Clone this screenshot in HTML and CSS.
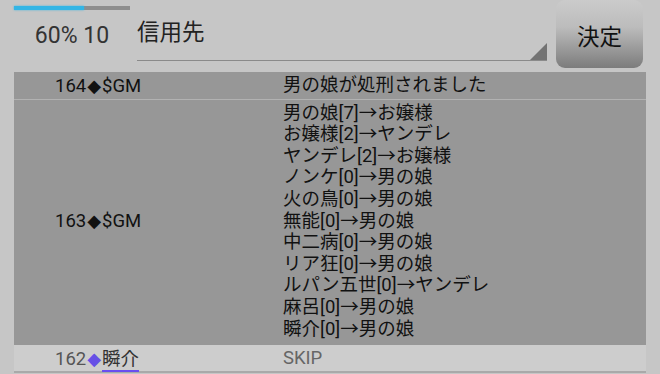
FILE: index.html
```html
<!DOCTYPE html>
<html lang="ja">
<head>
<meta charset="utf-8">
<link rel="stylesheet" href="styles.css">
</head>
<body>
<div class="screen">
  <header class="top">
    <div class="status">
      <div class="progress"><div class="progress-fill" style="width:60%"></div></div>
      <div class="status-label">60% 10</div>
    </div>
    <div class="spinner">信用先</div>
    <div class="decide">決定</div>
  </header>
  <div class="log">
    <div class="row dark sep">
      <div class="who">164<span class="dia">◆</span>$GM</div>
      <div class="what">男の娘が処刑されました</div>
    </div>
    <div class="row dark tall">
      <div class="who mid">163<span class="dia">◆</span>$GM</div>
      <div class="what">
        <div>男の娘[7]→お嬢様</div>
        <div>お嬢様[2]→ヤンデレ</div>
        <div>ヤンデレ[2]→お嬢様</div>
        <div>ノンケ[0]→男の娘</div>
        <div>火の鳥[0]→男の娘</div>
        <div>無能[0]→男の娘</div>
        <div>中二病[0]→男の娘</div>
        <div>リア狂[0]→男の娘</div>
        <div>ルパン五世[0]→ヤンデレ</div>
        <div>麻呂[0]→男の娘</div>
        <div>瞬介[0]→男の娘</div>
      </div>
    </div>
    <div class="row light">
      <div class="who">162<span class="dia purple">◆</span><span class="name">瞬介</span></div>
      <div class="what skip">SKIP</div>
    </div>
  </div>
</div>
</body>
</html>
```
FILE: styles.css
```css
html, body {
  margin: 0;
  padding: 0;
}
body {
  width: 660px;
  height: 374px;
  overflow: hidden;
  background: #c6c6c6;
  font-family: Roboto, "Noto Sans CJK JP", sans-serif;
  color: #111;
}
.top {
  display: flex;
  align-items: flex-start;
  height: 72px;
}
.status {
  width: 116px;
  margin-left: 14px;
  padding-top: 6px;
}
.progress {
  height: 4px;
  background: #8e8e8e;
}
.progress-fill {
  height: 4px;
  background: #33b5e5;
  box-shadow: 0 0 2px #33b5e5;
}
.status-label {
  margin-top: 13px;
  text-align: center;
  font-size: 23px;
  line-height: 26px;
  color: #333;
}
.spinner {
  position: relative;
  margin-left: 7px;
  width: 410px;
  height: 43px;
  padding-top: 17px;
  border-bottom: 1px solid #8a8a8a;
  font-size: 22.5px;
  line-height: 30px;
  color: #222;
  box-sizing: content-box;
}
.spinner::after {
  content: "";
  position: absolute;
  right: 0;
  bottom: 0;
  width: 0;
  height: 0;
  border-left: 17px solid transparent;
  border-bottom: 17px solid #737373;
}
.decide {
  margin-left: 9px;
  width: 87px;
  height: 68px;
  border-radius: 9px;
  background: linear-gradient(#cbcbcb 0%, #bcbcbc 40%, #7c7c7c 100%);
  display: flex;
  align-items: center;
  justify-content: center;
  font-size: 22.5px;
  color: #111;
  padding-top: 1px;
  box-sizing: border-box;
}
.log {
  margin: 0 14px;
  width: 632px;
}
.row {
  display: grid;
  grid-template-columns: 269px 1fr;
  font-size: 18.5px;
  line-height: 21.6px;
}
.row.dark {
  background: #979797;
  padding: 3px 0 1px;
}
.row.sep {
  border-bottom: 1px solid #b2b2b2;
}
.row.tall {
  padding: 3px 0 5px;
}
.row.light {
  background: #cdcdcd;
  padding: 3px 0 0;
  border-bottom: 2px solid #a9a9a9;
  color: #555;
}
.who {
  padding-left: 41px;
}
.who.mid {
  align-self: center;
}
.dia {
  font-family: "DejaVu Sans", sans-serif;
  font-size: 18px;
  margin: 0 1px;
}
.dia.purple {
  color: #6650e6;
}
.name {
  color: #333;
  border-bottom: 2px solid #6a4ef0;
}
.skip {
  color: #666;
}
```
